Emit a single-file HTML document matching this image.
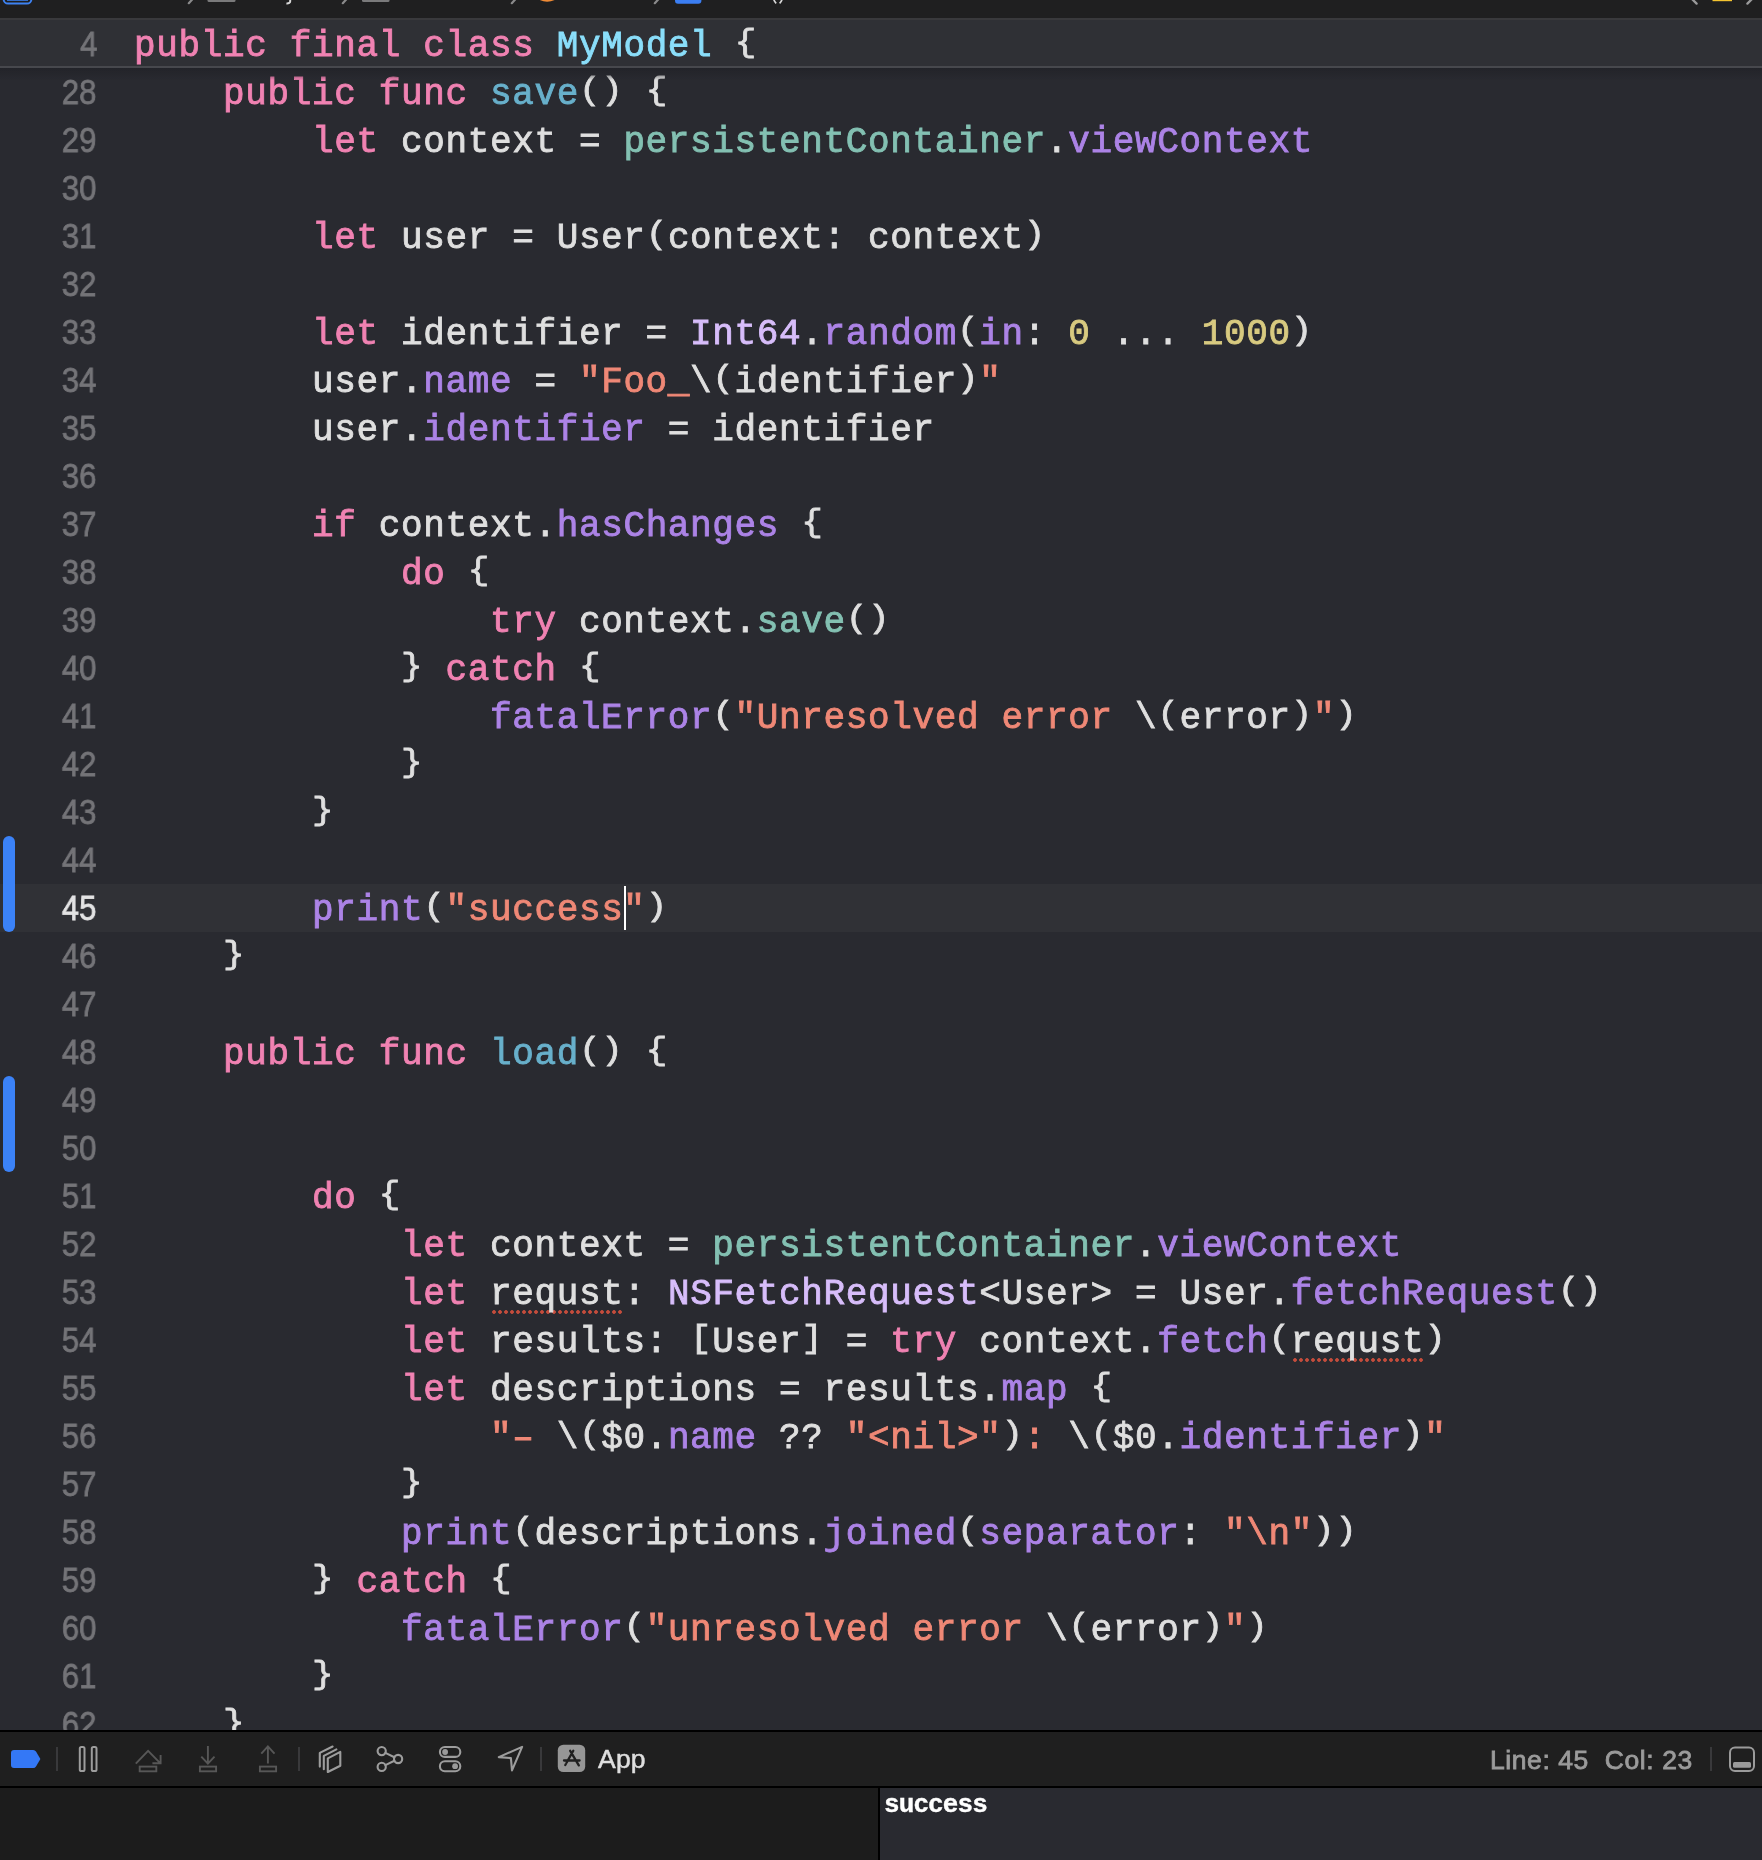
<!DOCTYPE html>
<html lang="en">
<head>
<meta charset="utf-8">
<title>MyModel.swift</title>
<style>
*{box-sizing:border-box}
html,body{margin:0;padding:0}
body{width:1762px;height:1860px;overflow:hidden;background:#292a30;position:relative;font-family:"Liberation Sans",sans-serif}
#topbar{position:absolute;left:0;top:0;width:1762px;height:18px;background:#1f1f20;overflow:hidden}
#topline{position:absolute;left:0;top:18px;width:1762px;height:2px;background:#39393c}
#sticky{position:absolute;left:0;top:20px;width:1762px;height:46px;background:#2f3035}
#stickyline{position:absolute;left:0;top:66px;width:1762px;height:2px;background:#47484d}
#stickyshadow{position:absolute;left:0;top:68px;width:1762px;height:12px;background:linear-gradient(#232429,rgba(41,42,48,0))}
#editor{position:absolute;left:0;top:68px;width:1762px;height:1662px;overflow:hidden}
.hl{position:absolute;left:0;top:816px;width:1762px;height:48px;background:#303136}
.bar{position:absolute;left:3px;width:12px;border-radius:6px;background:#3b82f7}
.ln,.cl{will-change:transform;position:absolute;height:48px;line-height:48px;white-space:pre}
.ln{left:0;width:96.5px;text-align:right;color:#747478;font-family:"Liberation Sans",sans-serif;font-size:35px;-webkit-text-stroke:.8px currentColor;transform:scaleX(.89);transform-origin:100% 50%}
.ln.cur{color:#e3e3e4}
.cl{left:134px;line-height:54px;color:#dfdfdf;font-family:"Liberation Mono","DejaVu Sans Mono",monospace;font-size:36px;letter-spacing:.64px;-webkit-text-stroke:.85px currentColor}
.b{display:inline-block;transform-origin:50% 8.3px;transform:translateY(-1.5px) scaleY(.89)}
.k{color:#f082b2}.t{color:#8adefa}.d{color:#68b0cb}.p{color:#83c0b2}.o{color:#ac83e6}.c{color:#d7bdfa}.s{color:#ef8876}.n{color:#d8ca80}
.sp{background:radial-gradient(circle at 2px 50%,#c44c3c 1.5px,rgba(196,76,60,0) 2.2px) 2px calc(100% - .8px)/6px 4px repeat-x}
#caret{position:absolute;left:624px;top:818px;width:2px;height:44px;background:#fff}
#l1{position:absolute;left:0;top:1730px;width:1762px;height:2px;background:#000}
#dbg{position:absolute;left:0;top:1732px;width:1762px;height:54px;background:#1f1f1f}
#l2{position:absolute;left:0;top:1786px;width:1762px;height:2px;background:#000}
#vars{position:absolute;left:0;top:1788px;width:878px;height:72px;background:#1c1c1c}
#vdiv{position:absolute;left:878px;top:1788px;width:2px;height:72px;background:#000}
#console{position:absolute;left:880px;top:1788px;width:882px;height:72px;background:#292a30}
#console span{position:absolute;left:4.4px;-webkit-text-stroke:.4px currentColor;top:2px;color:#fff;font-family:"Liberation Mono","DejaVu Sans Mono",monospace;font-weight:bold;font-size:26px;line-height:30px;letter-spacing:-.9px}
.sep{position:absolute;top:15px;width:2px;height:24px;background:#39393b}
#dbg svg{position:absolute;overflow:visible}
.app,.pos,#console span{will-change:transform}
.app{position:absolute;left:597.5px;top:12px;font-size:26.5px;line-height:30px;color:#dfdfdf;letter-spacing:.2px;-webkit-text-stroke:.5px currentColor}
.pos{position:absolute;left:1489.5px;top:12.5px;font-size:26.5px;line-height:30px;color:#9b9b9b;white-space:pre;letter-spacing:.58px;-webkit-text-stroke:.8px currentColor}
</style>
</head>
<body>
<div id="topbar"><svg width="1762" height="18" viewBox="0 0 1762 18" style="position:absolute;left:0;top:0;overflow:visible" fill="none">
<rect x="3.6" y="-12" width="27.8" height="15.6" rx="4.5" stroke="#3d82f2" stroke-width="2"/>
<rect x="7" y="-4" width="21" height="4.8" fill="#3d82f2"/>
<g stroke="#8a8a8b" stroke-width="2.2" stroke-linecap="round">
<path d="M192.6 -1L188.8 3.2M346.6 -1L342.8 3.2M515.6 -1L511.8 3.2M658.6 -1L654.8 3.2"/>
</g>
<g stroke="#9a9a9b" stroke-width="2.3" stroke-linecap="round">
<path d="M1692 -1L1696.6 3.6M1752 -1L1747.4 3.6"/>
</g>
<rect x="207.5" y="-4" width="28" height="6" rx="1.5" fill="#7a7a7b"/>
<rect x="362" y="-4" width="27.5" height="6" rx="1.5" fill="#7a7a7b"/>
<path d="M290.2 -2V1.2Q290.2 3.6 286.4 3.4" stroke="#d8d8d8" stroke-width="2"/>
<path d="M538 -1Q547 4.6 556.6 -1Z" fill="#ef8a35"/>
<rect x="675" y="-6" width="26.4" height="9.8" rx="3" fill="#3b7ef2"/>
<path d="M773.6 -1Q774.6 2 776.2 3.4M782.2 -1Q781.2 2 779.6 3.4" stroke="#d8d8d8" stroke-width="1.7"/>
<rect x="1712.5" y="-4" width="19.5" height="5.2" fill="#f4c430"/>
</svg></div>
<div id="topline"></div>
<div id="sticky">
<div class="ln" style="top:0;left:1px">4</div>
<div class="cl" style="top:-.5px"><span class="k">public</span> <span class="k">final</span> <span class="k">class</span> <span class="t">MyModel</span> <span class="b">{</span></div>
</div>
<div id="stickyline"></div>
<div id="editor">
<div class="hl"></div>
<div class="bar" style="top:768px;height:96px"></div>
<div class="bar" style="top:1008px;height:96px"></div>
<div class="ln" style="top:0px">28</div>
<div class="cl" style="top:0px">    <span class="k">public</span> <span class="k">func</span> <span class="d">save</span><span class="b">()</span> <span class="b">{</span></div>
<div class="ln" style="top:48px">29</div>
<div class="cl" style="top:48px">        <span class="k">let</span> context = <span class="p">persistentContainer</span>.<span class="o">viewContext</span></div>
<div class="ln" style="top:96px">30</div>
<div class="ln" style="top:144px">31</div>
<div class="cl" style="top:144px">        <span class="k">let</span> user = User<span class="b">(</span>context: context<span class="b">)</span></div>
<div class="ln" style="top:192px">32</div>
<div class="ln" style="top:240px">33</div>
<div class="cl" style="top:240px">        <span class="k">let</span> identifier = <span class="c">Int64</span>.<span class="o">random</span><span class="b">(</span><span class="o">in</span>: <span class="n">0</span> ... <span class="n">1000</span><span class="b">)</span></div>
<div class="ln" style="top:288px">34</div>
<div class="cl" style="top:288px">        user.<span class="o">name</span> = <span class="s">"Foo_</span>\<span class="b">(</span>identifier<span class="b">)</span><span class="s">"</span></div>
<div class="ln" style="top:336px">35</div>
<div class="cl" style="top:336px">        user.<span class="o">identifier</span> = identifier</div>
<div class="ln" style="top:384px">36</div>
<div class="ln" style="top:432px">37</div>
<div class="cl" style="top:432px">        <span class="k">if</span> context.<span class="o">hasChanges</span> <span class="b">{</span></div>
<div class="ln" style="top:480px">38</div>
<div class="cl" style="top:480px">            <span class="k">do</span> <span class="b">{</span></div>
<div class="ln" style="top:528px">39</div>
<div class="cl" style="top:528px">                <span class="k">try</span> context.<span class="p">save</span><span class="b">()</span></div>
<div class="ln" style="top:576px">40</div>
<div class="cl" style="top:576px">            <span class="b">}</span> <span class="k">catch</span> <span class="b">{</span></div>
<div class="ln" style="top:624px">41</div>
<div class="cl" style="top:624px">                <span class="o">fatalError</span><span class="b">(</span><span class="s">"Unresolved error </span>\<span class="b">(</span>error<span class="b">)</span><span class="s">"</span><span class="b">)</span></div>
<div class="ln" style="top:672px">42</div>
<div class="cl" style="top:672px">            <span class="b">}</span></div>
<div class="ln" style="top:720px">43</div>
<div class="cl" style="top:720px">        <span class="b">}</span></div>
<div class="ln" style="top:768px">44</div>
<div class="ln cur" style="top:816px">45</div>
<div class="cl" style="top:816px">        <span class="o">print</span><span class="b">(</span><span class="s">"success"</span><span class="b">)</span></div>
<div class="ln" style="top:864px">46</div>
<div class="cl" style="top:864px">    <span class="b">}</span></div>
<div class="ln" style="top:912px">47</div>
<div class="ln" style="top:960px">48</div>
<div class="cl" style="top:960px">    <span class="k">public</span> <span class="k">func</span> <span class="d">load</span><span class="b">()</span> <span class="b">{</span></div>
<div class="ln" style="top:1008px">49</div>
<div class="ln" style="top:1056px">50</div>
<div class="ln" style="top:1104px">51</div>
<div class="cl" style="top:1104px">        <span class="k">do</span> <span class="b">{</span></div>
<div class="ln" style="top:1152px">52</div>
<div class="cl" style="top:1152px">            <span class="k">let</span> context = <span class="p">persistentContainer</span>.<span class="o">viewContext</span></div>
<div class="ln" style="top:1200px">53</div>
<div class="cl" style="top:1200px">            <span class="k">let</span> <span class="sp">requst</span>: <span class="c">NSFetchRequest</span>&lt;User&gt; = User.<span class="o">fetchRequest</span><span class="b">()</span></div>
<div class="ln" style="top:1248px">54</div>
<div class="cl" style="top:1248px">            <span class="k">let</span> results: <span class="b">[</span>User<span class="b">]</span> = <span class="k">try</span> context.<span class="o">fetch</span><span class="b">(</span><span class="sp">requst</span><span class="b">)</span></div>
<div class="ln" style="top:1296px">55</div>
<div class="cl" style="top:1296px">            <span class="k">let</span> descriptions = results.<span class="o">map</span> <span class="b">{</span></div>
<div class="ln" style="top:1344px">56</div>
<div class="cl" style="top:1344px">                <span class="s">"– </span>\<span class="b">(</span>$0.<span class="o">name</span> ?? <span class="s">"&lt;nil&gt;"</span><span class="b">)</span><span class="s">:</span> \<span class="b">(</span>$0.<span class="o">identifier</span><span class="b">)</span><span class="s">"</span></div>
<div class="ln" style="top:1392px">57</div>
<div class="cl" style="top:1392px">            <span class="b">}</span></div>
<div class="ln" style="top:1440px">58</div>
<div class="cl" style="top:1440px">            <span class="o">print</span><span class="b">(</span>descriptions.<span class="o">joined</span><span class="b">(</span><span class="o">separator</span>: <span class="s">"\n"</span><span class="b">))</span></div>
<div class="ln" style="top:1488px">59</div>
<div class="cl" style="top:1488px">        <span class="b">}</span> <span class="k">catch</span> <span class="b">{</span></div>
<div class="ln" style="top:1536px">60</div>
<div class="cl" style="top:1536px">            <span class="o">fatalError</span><span class="b">(</span><span class="s">"unresolved error </span>\<span class="b">(</span>error<span class="b">)</span><span class="s">"</span><span class="b">)</span></div>
<div class="ln" style="top:1584px">61</div>
<div class="cl" style="top:1584px">        <span class="b">}</span></div>
<div class="ln" style="top:1632px">62</div>
<div class="cl" style="top:1632px">    <span class="b">}</span></div>
<div id="caret"></div>
</div>
<div id="stickyshadow"></div>
<div id="l1"></div>
<div id="dbg">
<svg width="1762" height="54" viewBox="0 0 1762 54" style="left:0;top:0" fill="none" stroke-linecap="butt" stroke-linejoin="miter">
<path d="M14 18H33.2Q35 18 36 19.6L40.4 27L36 34.4Q35 36 33.2 36H14Q11 36 11 33V21Q11 18 14 18Z" fill="#3478f6"/>
<g stroke="#9d9d9d" stroke-width="2">
<rect x="79.8" y="14.9" width="4.7" height="24.2" rx="1.6"/>
<rect x="91.8" y="14.9" width="4.7" height="24.2" rx="1.6"/>
</g>
<g stroke="#575757" stroke-width="1.9">
<path d="M135.8 31.6L148.1 18.8L160.2 31.2M152.4 31.3H160.6V23"/>
<rect x="139.7" y="34.6" width="16.6" height="4.7"/>
<path d="M207.9 14V31.4M201.3 24.6L207.9 31.6L214.5 24.6"/>
<rect x="199.9" y="34.6" width="16.2" height="4.7"/>
<path d="M267.9 31.6V14.6M261.3 21.6L267.9 14.4L274.5 21.6"/>
<rect x="259.9" y="34.6" width="16.2" height="4.7"/>
</g>
<g stroke="#9d9d9d" stroke-width="2.1" stroke-linejoin="round" stroke-linecap="round">
<path d="M327.8 26.4L340.3 19.9V33.7L327.8 40Z"/>
<path d="M323.8 37.2V23.9L336.4 17.4"/>
<path d="M319.8 34.6V20.9L332.6 14.5"/>
<circle cx="381.7" cy="19.1" r="4.1"/>
<circle cx="398.1" cy="27" r="4.1"/>
<circle cx="381.7" cy="34.9" r="4.1"/>
<path d="M385.4 20.9L394.4 25.2M385.4 33.1L394.4 28.8"/>
<rect x="439.9" y="15" width="20.4" height="9.9" rx="4.95"/>
<rect x="439.9" y="29.3" width="20.4" height="9.9" rx="4.95"/>
<path d="M522.1 14.9L498.8 25.1L510.9 26.1L512 38.4Z"/>
</g>
<circle cx="445.1" cy="20" r="2.9" fill="#9b9b9b"/>
<circle cx="455.1" cy="34.2" r="2.9" fill="#9b9b9b"/>
<rect x="557.8" y="12.7" width="27.4" height="27.3" rx="5.5" fill="#969696"/>
<g stroke="#1f1f1f" stroke-width="2.3" stroke-linecap="round">
<path d="M573.3 18.8L566.6 30.6M570.2 18.8L578.8 33.4M564 28.5H579.6M565.3 33L565.8 32.2"/>
</g>
<rect x="1730" y="15.4" width="24" height="23.6" rx="5" stroke="#9b9b9b" stroke-width="2"/>
<rect x="1733" y="30" width="18" height="5.7" rx="1.5" fill="#9b9b9b"/>
</svg>
<div class="sep" style="left:56px"></div>
<div class="sep" style="left:298px"></div>
<div class="sep" style="left:540px"></div>
<div class="sep" style="left:1710px"></div>
<div class="app">App</div>
<div class="pos">Line: 45  Col: 23</div>

</div>
<div id="l2"></div>
<div id="vars"></div>
<div id="vdiv"></div>
<div id="console"><span>success</span></div>
</body>
</html>
